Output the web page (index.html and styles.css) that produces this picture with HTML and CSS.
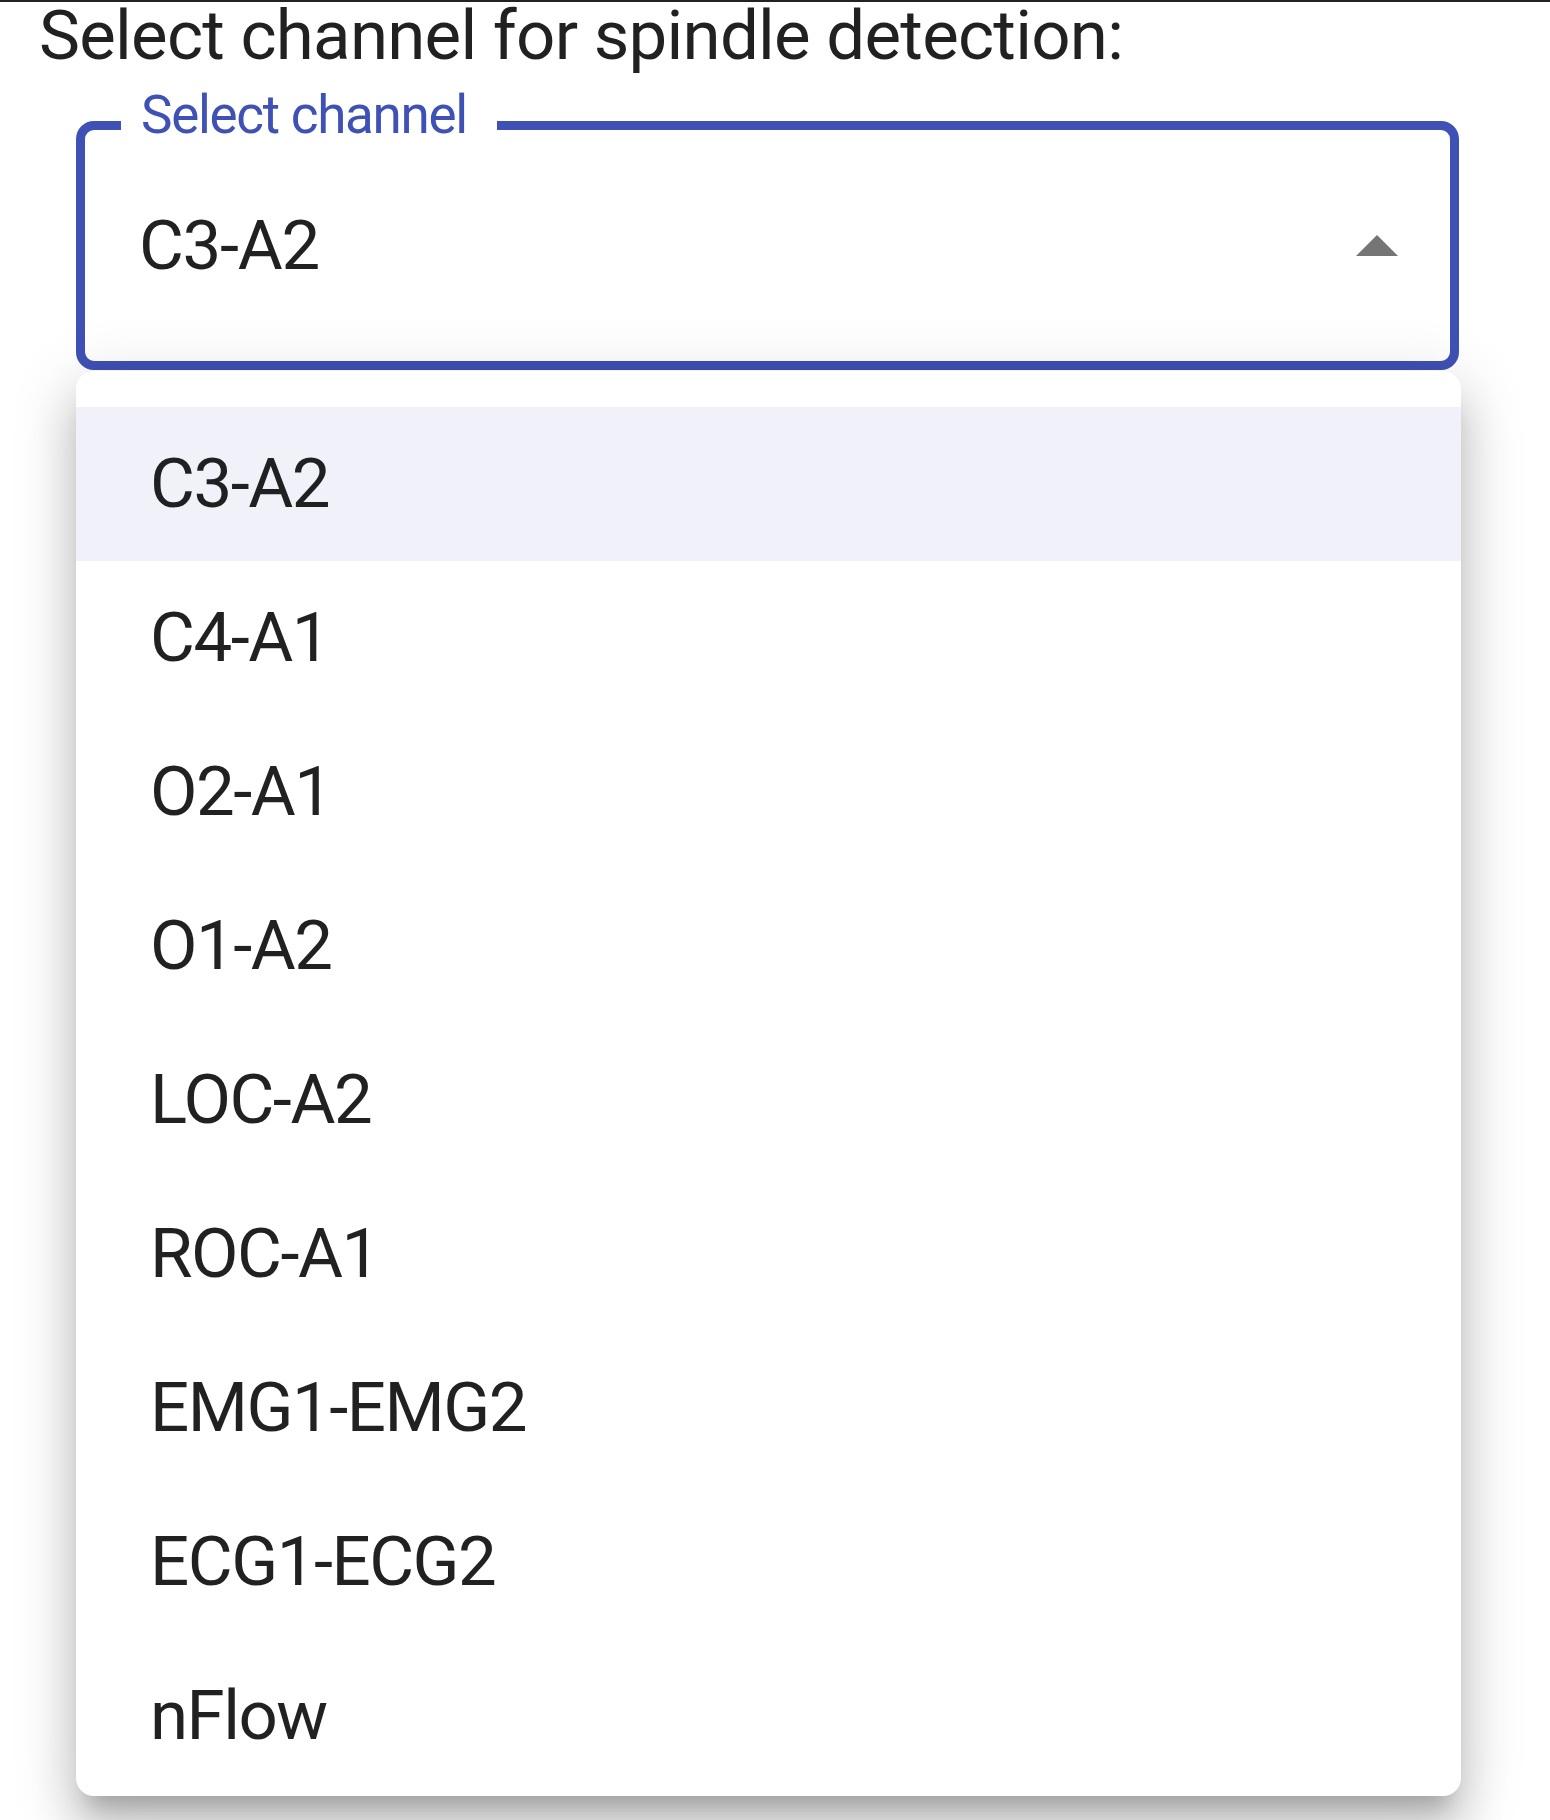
FILE: index.html
```html
<!DOCTYPE html>
<html lang="en">
<head>
<meta charset="utf-8">
<title>Select channel</title>
<link rel="stylesheet" href="styles.css">
</head>
<body>
<div class="page">
  <h1 class="heading">Select channel for spindle detection:</h1>
  <div class="field">
    <span class="field-label">Select channel</span>
    <span class="field-value">C3-A2</span>
    <svg class="field-arrow" width="42" height="21" viewBox="0 0 42 21" aria-hidden="true"><polygon points="0,21 21,0 42,21" fill="#757575"/></svg>
  </div>
  <ul class="menu">
    <li class="menu-item selected">C3-A2</li>
    <li class="menu-item">C4-A1</li>
    <li class="menu-item">O2-A1</li>
    <li class="menu-item">O1-A2</li>
    <li class="menu-item">LOC-A2</li>
    <li class="menu-item">ROC-A1</li>
    <li class="menu-item">EMG1-EMG2</li>
    <li class="menu-item">ECG1-ECG2</li>
    <li class="menu-item">nFlow</li>
  </ul>
</div>
</body>
</html>
```

FILE: styles.css
```css
html, body {
  margin: 0;
  padding: 0;
  background: #ffffff;
}

body {
  font-family: Roboto, "Liberation Sans", Arial, sans-serif;
  color: rgba(0, 0, 0, 0.87);
}

.page {
  border-top: 2px solid #222222;
  width: 1550px;
  height: 1818px;
  overflow: hidden;
}

.heading {
  margin: 0 0 0 39px;
  font-size: 69px;
  font-weight: 400;
  line-height: 68px;
  letter-spacing: -0.75px;
  white-space: nowrap;
}

.field {
  position: relative;
  box-sizing: border-box;
  margin: 51px 0 0 76px;
  width: 1383px;
  height: 249px;
  border: 9px solid #3f51b5;
  border-radius: 18px;
  display: flex;
  align-items: center;
  padding: 0 52px 0 54px;
  background: #ffffff;
}

.field-label {
  position: absolute;
  top: -45px;
  left: 36px;
  padding: 0 30px 0 20px;
  background: #ffffff;
  color: #3f51b5;
  font-size: 53px;
  line-height: 60px;
  letter-spacing: -1.3px;
  white-space: nowrap;
}

.field-value {
  flex: 1;
  font-size: 69px;
  line-height: 82px;
  letter-spacing: -1.3px;
}

.field-arrow {
  display: block;
  flex: none;
}

.menu {
  position: relative;
  z-index: 1;
  list-style: none;
  box-sizing: border-box;
  margin: 1px 0 0 76px;
  padding: 36px 0 0 0;
  width: 1385px;
  height: 1425px;
  overflow: hidden;
  background: #ffffff;
  border-radius: 18px;
  box-shadow:
    0 22px 22px -13px rgba(0, 0, 0, 0.2),
    0 35px 44px 4px rgba(0, 0, 0, 0.14),
    0 13px 62px 9px rgba(0, 0, 0, 0.12);
}

.menu-item {
  box-sizing: border-box;
  height: 154px;
  display: flex;
  align-items: center;
  padding-left: 74px;
  font-size: 69px;
  line-height: 82px;
  letter-spacing: -1.5px;
  color: rgba(0, 0, 0, 0.87);
}

.menu-item.selected {
  background: rgba(63, 81, 181, 0.08);
}
```
